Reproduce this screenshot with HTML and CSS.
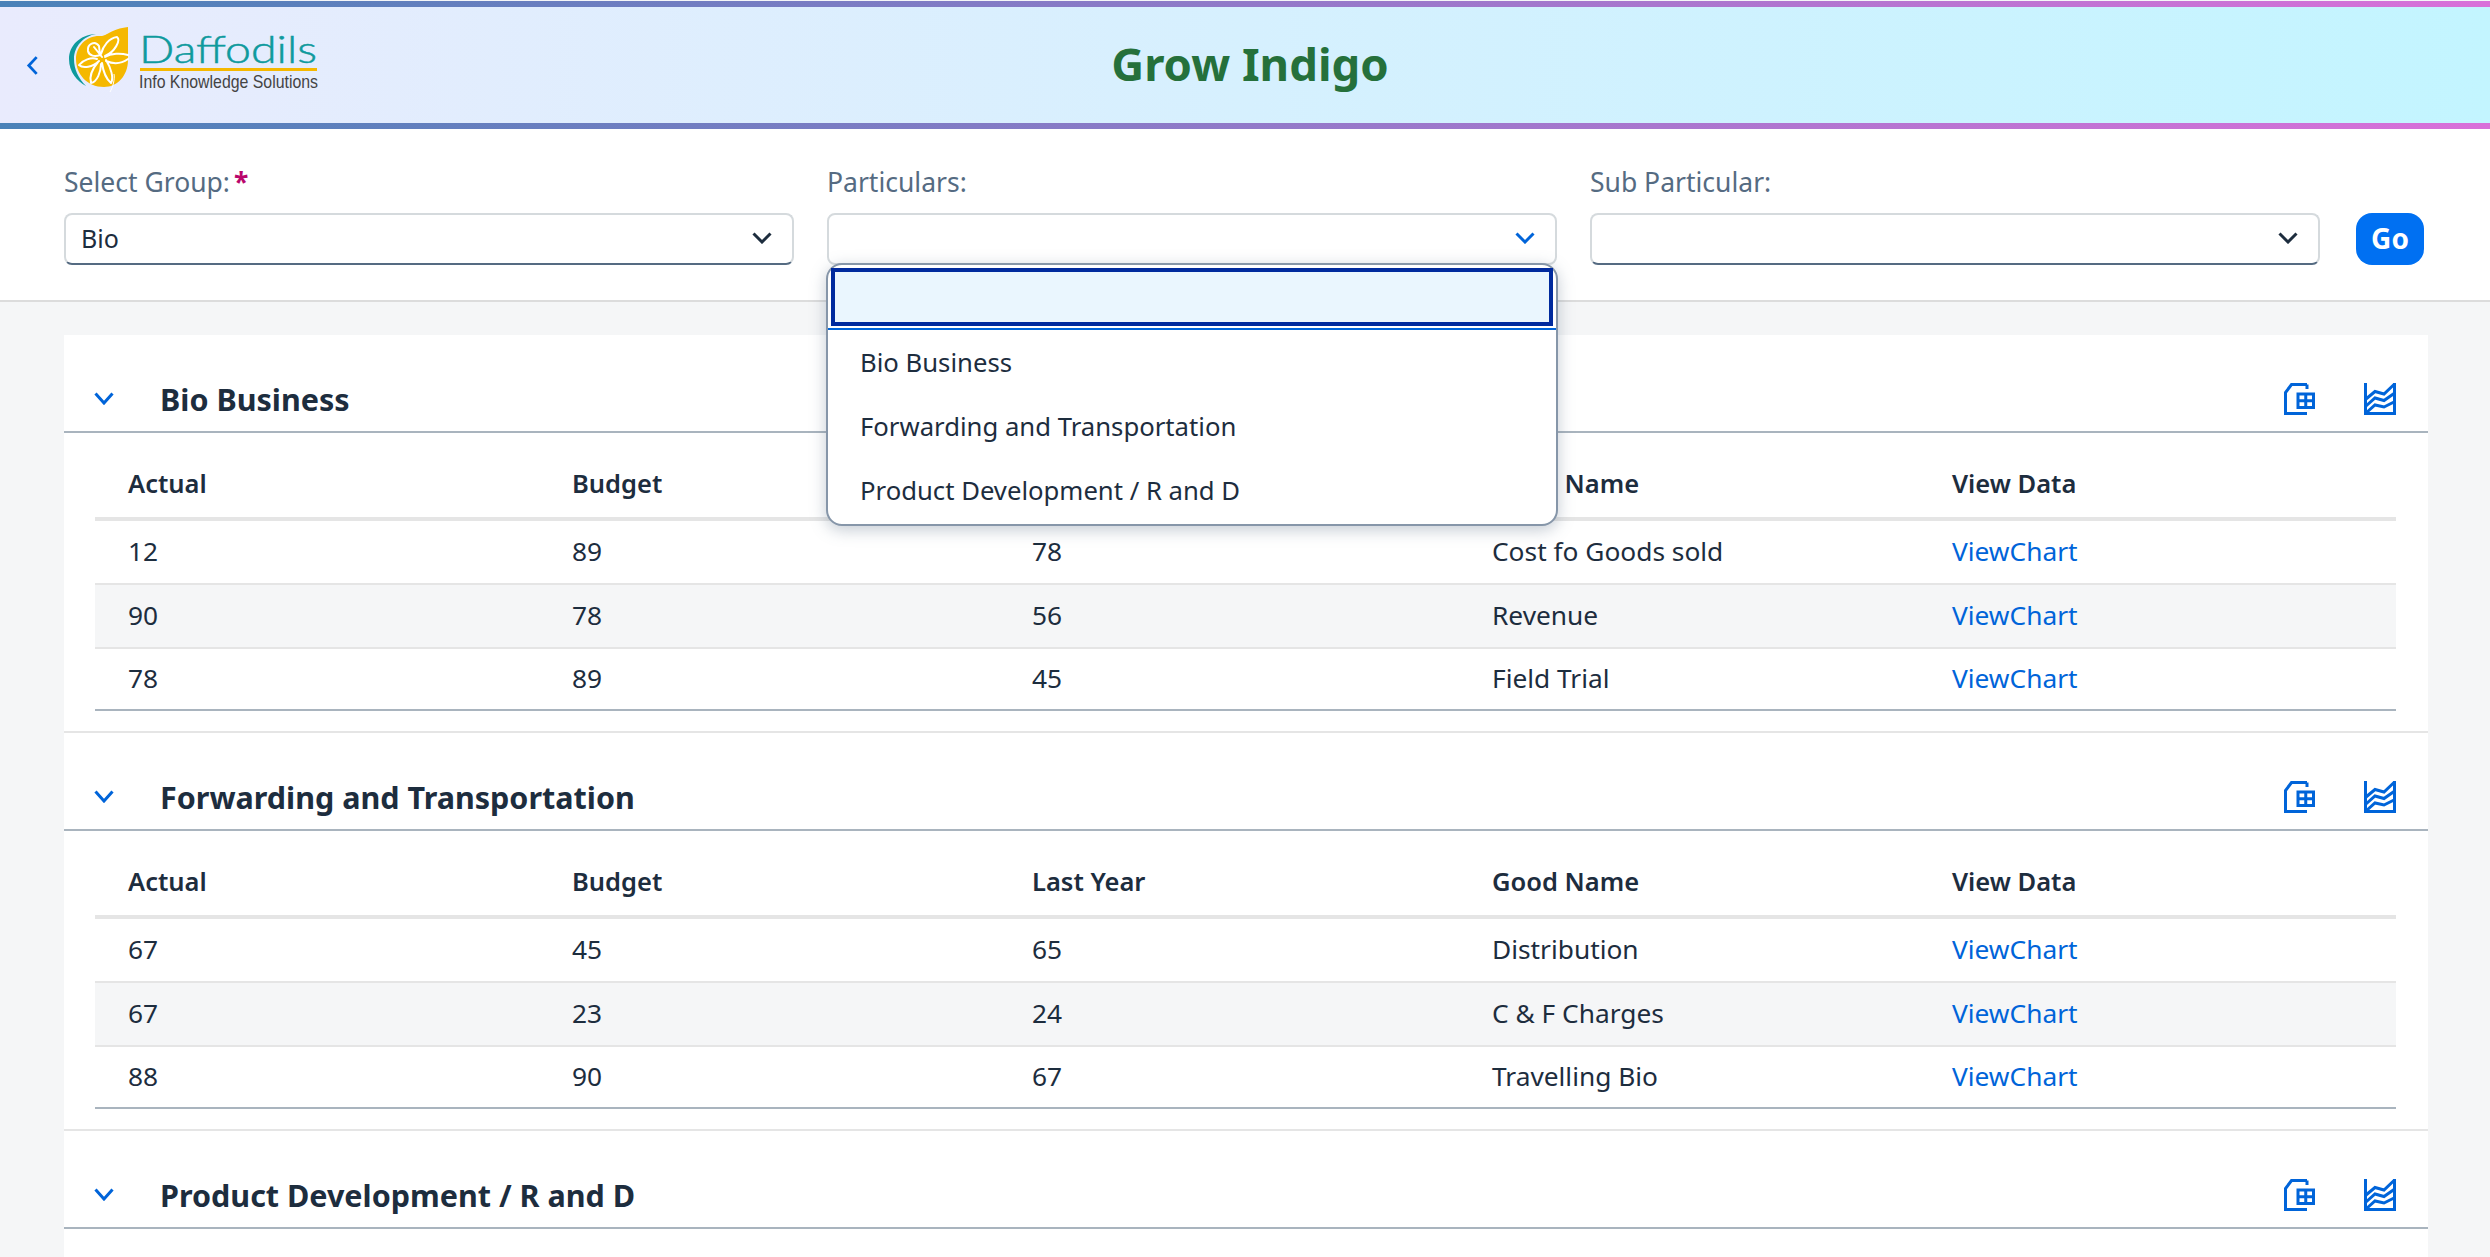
FILE: index.html
```html
<!DOCTYPE html>
<html lang="en">
<head>
    <meta charset="UTF-8">
    <title>Grow Indigo</title>
    <link rel="stylesheet" href="styles.css">
</head>
<body>

<!-- Header -->
<header class="app-header">
    <div class="brand">
        <svg class="back-icon" viewBox="0 0 14 22"><path d="M11.5 2 3 11l8.500 9"/></svg>
        <svg class="logo" viewBox="0 0 252 70">
            <path class="logo-crescent" d="M27 8C10 9 0 20 0 33c0 13 8 22 17 27C9 52 5 43 5 33 5 20 15 10 27 8Z"/>
            <path class="logo-drop" d="M59 1v33c0 16-11 27-24 27C18 61 7 48 7 33 7 20 18 9 32 10 38 10 42 3 59 1Z"/>
            <path class="logo-flower" d="M32 28C34 20 40 12 48 11 52 14 46 26 36 30M28 33C22 31 14 34 10 39 14 43 24 41 30 35M36 31C42 27 52 27 59 29M37 35C44 38 52 38 59 33M29 36C24 42 20 50 22 57 28 56 32 46 32 38M33 37C34 44 36 52 42 57 45 52 42 42 37 34M30 20C26 14 18 18 19 25 20 30 26 31 31 29ZM25 21 33 31"/>
            <path class="logo-stem" d="M45 48c1 5-1 13-4 18"/>
            <text class="logo-name" x="70" y="37" textLength="178" lengthAdjust="spacingAndGlyphs">Daffodils</text>
            <rect class="logo-rule" x="71" y="42" width="177" height="3"/>
            <text class="logo-tagline" x="70" y="62" textLength="179" lengthAdjust="spacingAndGlyphs">Info Knowledge Solutions</text>
        </svg>
    </div>
    <h1 class="app-title">Grow Indigo</h1>
    <div></div>
</header>

<!-- Filter -->
<section class="filter-bar">
    <div class="field">
        <label class="field-label">Select Group:<span class="required">*</span></label>
        <div class="select-box">
            <span>Bio</span>
            <svg class="select-arrow" viewBox="0 0 20 12"><path d="M1.5 1.5 10 10l8.500-8.500"/></svg>
        </div>
    </div>
    <div class="field">
        <label class="field-label">Particulars:</label>
        <div class="select-box select-open">
            <span></span>
            <svg class="select-arrow" viewBox="0 0 20 12"><path d="M1.5 1.5 10 10l8.500-8.500"/></svg>
        </div>
        <div class="dropdown">
            <div class="dropdown-search"><input class="dropdown-input" type="text"></div>
            <div class="dropdown-item">Bio Business</div>
            <div class="dropdown-item">Forwarding and Transportation</div>
            <div class="dropdown-item">Product Development / R and D</div>
        </div>
    </div>
    <div class="field">
        <label class="field-label">Sub Particular:</label>
        <div class="select-box">
            <span></span>
            <svg class="select-arrow" viewBox="0 0 20 12"><path d="M1.5 1.5 10 10l8.500-8.500"/></svg>
        </div>
    </div>
    <button class="go-button">Go</button>
</section>

<main class="content">
    <div class="card">

        <section class="panel">
            <div class="panel-head">
                <svg class="panel-arrow" viewBox="0 0 20 13"><path d="M1.5 1.5 10 11l8.500-9.500"/></svg>
                <h2 class="panel-title">Bio Business</h2>
                <div class="panel-actions">
                    <svg class="action-icon" viewBox="0 0 32 32"><path d="M23 1.500H7.500L1.500 9.500V30.500H23M23 1.500V6"/><path d="M14 11H29.500V24.500H14ZM21.750 11V24.500M14 17.750H29.500"/></svg>
                    <svg class="action-icon" viewBox="0 0 32 32"><path d="M1.500 0V30.500H30.500V0M2 16 11 8.500 20 11 30 1.500M2 23 11 15 20 17.500 30 10.500M2 30 11 22 20 24 30 19"/></svg>
                </div>
            </div>
            <table class="data-table">
                <thead>
                    <tr><th>Actual</th><th>Budget</th><th>Last Year</th><th>Good Name</th><th>View Data</th></tr>
                </thead>
                <tbody>
                    <tr><td>12</td><td>89</td><td>78</td><td>Cost fo Goods sold</td><td><a class="chart-link" href="#">ViewChart</a></td></tr>
                    <tr><td>90</td><td>78</td><td>56</td><td>Revenue</td><td><a class="chart-link" href="#">ViewChart</a></td></tr>
                    <tr><td>78</td><td>89</td><td>45</td><td>Field Trial</td><td><a class="chart-link" href="#">ViewChart</a></td></tr>
                </tbody>
            </table>
        </section>

        <section class="panel">
            <div class="panel-head">
                <svg class="panel-arrow" viewBox="0 0 20 13"><path d="M1.5 1.5 10 11l8.500-9.500"/></svg>
                <h2 class="panel-title">Forwarding and Transportation</h2>
                <div class="panel-actions">
                    <svg class="action-icon" viewBox="0 0 32 32"><path d="M23 1.500H7.500L1.500 9.500V30.500H23M23 1.500V6"/><path d="M14 11H29.500V24.500H14ZM21.750 11V24.500M14 17.750H29.500"/></svg>
                    <svg class="action-icon" viewBox="0 0 32 32"><path d="M1.500 0V30.500H30.500V0M2 16 11 8.500 20 11 30 1.500M2 23 11 15 20 17.500 30 10.500M2 30 11 22 20 24 30 19"/></svg>
                </div>
            </div>
            <table class="data-table">
                <thead>
                    <tr><th>Actual</th><th>Budget</th><th>Last Year</th><th>Good Name</th><th>View Data</th></tr>
                </thead>
                <tbody>
                    <tr><td>67</td><td>45</td><td>65</td><td>Distribution</td><td><a class="chart-link" href="#">ViewChart</a></td></tr>
                    <tr><td>67</td><td>23</td><td>24</td><td>C &amp; F Charges</td><td><a class="chart-link" href="#">ViewChart</a></td></tr>
                    <tr><td>88</td><td>90</td><td>67</td><td>Travelling Bio</td><td><a class="chart-link" href="#">ViewChart</a></td></tr>
                </tbody>
            </table>
        </section>

        <section class="panel">
            <div class="panel-head">
                <svg class="panel-arrow" viewBox="0 0 20 13"><path d="M1.5 1.5 10 11l8.500-9.500"/></svg>
                <h2 class="panel-title">Product Development / R and D</h2>
                <div class="panel-actions">
                    <svg class="action-icon" viewBox="0 0 32 32"><path d="M23 1.500H7.500L1.500 9.500V30.500H23M23 1.500V6"/><path d="M14 11H29.500V24.500H14ZM21.750 11V24.500M14 17.750H29.500"/></svg>
                    <svg class="action-icon" viewBox="0 0 32 32"><path d="M1.500 0V30.500H30.500V0M2 16 11 8.500 20 11 30 1.500M2 23 11 15 20 17.500 30 10.500M2 30 11 22 20 24 30 19"/></svg>
                </div>
            </div>
        </section>

    </div>
</main>

</body>
</html>
```

FILE: styles.css
```css
* {
    box-sizing: border-box;
}
html, body {
    height: 100%;
    overflow: hidden;
}
body {
    margin: 0;
    padding-top: 1px;
    background-color: #f5f6f7;
    color: #1d2d3e;
    font-family: "Noto Sans", "Liberation Sans", sans-serif;
    font-size: 25px;
}

/* header */
.app-header {
    display: grid;
    grid-template-columns: 1fr auto 1fr;
    align-items: center;
    height: 128px;
    border-top: 6px solid;
    border-bottom: 6px solid;
    border-image: linear-gradient(90deg, #4a82b8, #d970d9) 1;
    background: linear-gradient(90deg, #e9ebfd, #c3f5ff);
}
.brand {
    display: flex;
    align-items: center;
    gap: 30px;
    padding-left: 26px;
}
.back-icon {
    width: 13px;
    height: 21px;
    fill: none;
    stroke: #0064d9;
    stroke-width: 3;
}
.logo {
    width: 252px;
    height: 70px;
    margin-bottom: 8px;
    overflow: visible;
}
.logo-crescent {
    fill: #0f9a9d;
}
.logo-drop {
    fill: #f5b800;
}
.logo-flower {
    fill: none;
    stroke: #fff;
    stroke-width: 2;
    stroke-linejoin: round;
    stroke-linecap: round;
}
.logo-stem {
    fill: none;
    stroke: #fff;
    stroke-width: 1;
}
.logo-name {
    fill: #0f9a9d;
    stroke: #0f9a9d;
    stroke-width: 0.5;
    font-family: Lato, sans-serif;
    font-size: 37px;
    font-weight: 300;
}
.logo-rule {
    fill: #f5b800;
}
.logo-tagline {
    fill: #444;
    font-family: "Liberation Sans", sans-serif;
    font-size: 19px;
}
.app-title {
    margin: 0 0 5px 10px;
    color: #25703b;
    font-size: 45.500px;
    font-weight: 700;
}

/* filter */
.filter-bar {
    display: flex;
    align-items: flex-end;
    gap: 33px;
    height: 173px;
    padding: 36px 64px 35px;
    border-bottom: 2px solid #dcdcdc;
    background-color: #fff;
}
.field {
    position: relative;
    flex: 0 0 730px;
}
.field-label {
    display: block;
    height: 34px;
    margin-bottom: 14px;
    color: #556b82;
    font-size: 26.500px;
    line-height: 34px;
}
.required {
    margin-left: 4px;
    color: #ba066c;
    font-weight: 700;
}
.select-box {
    display: flex;
    align-items: center;
    justify-content: space-between;
    height: 52px;
    padding: 0 20px 2px 15px;
    border: 2px solid #d5dadd;
    border-bottom-color: #556b82;
    border-radius: 8px;
    background-color: #fff;
}
.select-arrow {
    width: 20px;
    height: 12px;
    fill: none;
    stroke: #1d2d3e;
    stroke-width: 3;
}
.select-open {
    border-bottom-color: #d5dadd;
}
.select-open .select-arrow {
    stroke: #0064d9;
}
.go-button {
    width: 68px;
    height: 52px;
    margin-left: 3px;
    padding: 0 0 3px;
    border: none;
    border-radius: 16px;
    background-color: #0070f2;
    color: #fff;
    font-family: inherit;
    font-size: 28px;
    font-weight: 700;
}

/* dropdown */
.dropdown {
    position: absolute;
    top: 98px;
    left: -1px;
    z-index: 10;
    width: 732px;
    height: 263px;
    border: 2px solid #8696a9;
    border-radius: 16px;
    background-color: #fff;
    box-shadow: 0 4px 16px rgba(85, 107, 130, 0.35);
}
.dropdown-search {
    padding: 3px 3px 2px;
    border-bottom: 2px solid #0064d9;
}
.dropdown-input {
    display: block;
    width: 100%;
    height: 58px;
    border: 4px solid #002a9e;
    border-radius: 0;
    outline: none;
    background-color: #eaf6fe;
}
.dropdown-item {
    height: 64px;
    padding-left: 32px;
    font-size: 25.700px;
    line-height: 65px;
}

/* panels */
.content {
    padding: 33px 62px 0 64px;
}
.card {
    background-color: #fff;
}
.panel {
    height: 398px;
    padding-bottom: 22px;
    border-bottom: 2px solid #e5e5e5;
}
.panel-head {
    display: flex;
    align-items: center;
    gap: 46px;
    height: 98px;
    padding: 31px 32px 0 30px;
    border-bottom: 2px solid #a9b4be;
}
.panel-arrow {
    width: 20px;
    height: 13px;
    fill: none;
    stroke: #0064d9;
    stroke-width: 3;
}
.panel-title {
    flex: 1;
    margin: 0;
    font-size: 30.500px;
    font-weight: 700;
}
.panel-actions {
    display: flex;
    gap: 48px;
}
.action-icon {
    width: 32px;
    height: 32px;
    fill: none;
    stroke: #0064d9;
    stroke-width: 3;
}

/* table */
.data-table {
    width: 2301px;
    margin: 16px 0 0 31px;
    border-spacing: 0;
    table-layout: fixed;
    font-size: 26.300px;
}
.data-table th, .data-table td {
    padding: 0 33px;
    text-align: left;
}
.data-table th {
    width: 460px;
    height: 72px;
    border-bottom: 4px solid #e5e5e5;
    font-size: 25.500px;
    font-weight: 600;
}
.data-table th:first-child {
    width: 444px;
}
.data-table th:last-child {
    width: 477px;
}
.data-table td {
    height: 64px;
    padding-bottom: 3px;
    border-bottom: 2px solid #e5e5e5;
}
.data-table tbody tr:nth-child(2) td {
    background-color: #f5f6f7;
}
.data-table tbody tr:last-child td {
    height: 62px;
    border-bottom-color: #a9b4be;
}
.chart-link {
    color: #0064d9;
    text-decoration: none;
}
```
